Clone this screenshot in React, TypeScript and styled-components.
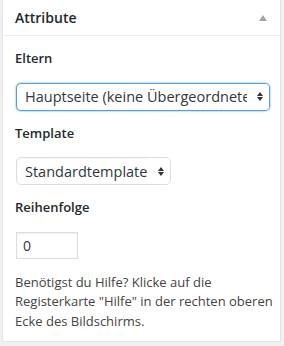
import React from 'react';
import styled, { createGlobalStyle } from 'styled-components';

const GlobalStyle = createGlobalStyle`
  html, body {
    margin: 0;
    padding: 0;
    background: #f1f1f1;
  }
  body {
    font-family: 'Open Sans', 'Liberation Sans', sans-serif;
    font-size: 13px;
    line-height: 1.5;
    color: #444;
  }
`;

const Postbox = styled.div`
  width: 277px;
  margin: 0 3px 0 2px;
  background: #fff;
  border: 1px solid #e5e5e5;
  border-top: none;
  box-shadow: 0 1px 1px rgba(0, 0, 0, 0.04);
`;

const Header = styled.div`
  display: flex;
  align-items: center;
  justify-content: space-between;
  height: 35px;
  padding: 0 12px;
  border-bottom: 1px solid #eee;
`;

const Title = styled.h2`
  margin: 0;
  font-size: 14px;
  font-weight: 600;
  line-height: 1.4;
  color: #23282d;
  padding-top: 1px;
`;

const Toggle = styled.span`
  display: block;
  width: 0;
  height: 0;
  margin-right: 1px;
  border-left: 4px solid transparent;
  border-right: 4px solid transparent;
  border-bottom: 6px solid #a0a5aa;
`;

const Inside = styled.div`
  padding: 0 12px 10px;
`;

const Label = styled.p`
  margin: 13px 0 14px;
  font-weight: 600;
  color: #23282d;
`;

const SelectWrap = styled.div<{ width: number }>`
  position: relative;
  width: ${(p) => p.width}px;
  margin-left: 1px;
`;

const Select = styled.select<{ focused?: boolean }>`
  appearance: none;
  -webkit-appearance: none;
  display: block;
  width: 100%;
  height: 28px;
  margin: 0;
  padding: 0 22px 0 8px;
  font-family: 'Open Sans', 'Liberation Sans', sans-serif;
  font-size: 14.5px;
  color: #32373c;
  background: #fff;
  border: 1px solid ${(p) => (p.focused ? '#5b9dd9' : '#ddd')};
  border-radius: 5px;
  box-shadow: ${(p) =>
    p.focused ? '0 0 2px rgba(30, 140, 190, 0.8)' : 'inset 0 1px 2px rgba(0, 0, 0, 0.04)'};
  outline: none;
`;

const Arrows = styled.span`
  position: absolute;
  right: 1px;
  top: 1px;
  bottom: 1px;
  width: 21px;
  box-sizing: border-box;
  padding-right: 6px;
  background: #fff;
  border-radius: 0 4px 4px 0;
  display: flex;
  flex-direction: column;
  align-items: flex-end;
  justify-content: center;
  gap: 1px;
  pointer-events: none;
`;

const Tri = styled.span<{ down?: boolean }>`
  display: block;
  width: 0;
  height: 0;
  border-left: 3px solid transparent;
  border-right: 3px solid transparent;
  ${(p) => (p.down ? 'border-top: 4px solid #333;' : 'border-bottom: 4px solid #333;')}
`;

const NumberInput = styled.input`
  display: block;
  box-sizing: border-box;
  width: 62px;
  height: 27px;
  margin: 0 0 0 1px;
  padding: 0 6px;
  font-family: 'Open Sans', 'Liberation Sans', sans-serif;
  font-size: 14px;
  color: #32373c;
  border: 1px solid #ddd;
  box-shadow: inset 0 1px 2px rgba(0, 0, 0, 0.07);
  outline: none;
`;

const Help = styled.p`
  margin: 14px -6px 0 0;
  color: #444;
`;

const SelectBox = ({ value, width, focused }: { value: string; width: number; focused?: boolean }) => (
  <SelectWrap width={width}>
    <Select focused={focused} defaultValue={value}>
      <option>{value}</option>
    </Select>
    <Arrows>
      <Tri />
      <Tri down />
    </Arrows>
  </SelectWrap>
);

const App = () => (
  <>
    <GlobalStyle />
    <Postbox>
      <Header>
        <Title>Attribute</Title>
        <Toggle />
      </Header>
      <Inside>
        <Label>Eltern</Label>
        <SelectBox value="Hauptseite (keine Übergeordnete)" width={254} focused />
        <Label>Template</Label>
        <SelectBox value="Standardtemplate" width={155} />
        <Label>Reihenfolge</Label>
        <NumberInput type="text" defaultValue="0" />
        <Help>
          Benötigst du Hilfe? Klicke auf die Registerkarte "Hilfe" in der rechten oberen Ecke des
          Bildschirms.
        </Help>
      </Inside>
    </Postbox>
  </>
);

export default App;
